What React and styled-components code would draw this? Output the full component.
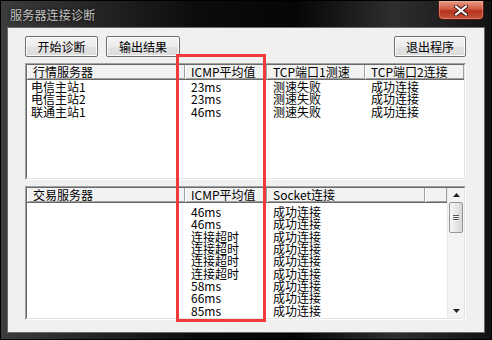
import React from "react";
import styled, { createGlobalStyle } from "styled-components";

const GlobalStyle = createGlobalStyle`
  html, body {
    margin: 0;
    padding: 0;
    background: #000;
  }
  body {
    font-family: "Noto Sans CJK SC", "Liberation Sans", sans-serif;
  }
`;

const topRows = [
  ["电信主站1", "23ms", "测速失败", "成功连接"],
  ["电信主站2", "23ms", "测速失败", "成功连接"],
  ["联通主站1", "46ms", "测速失败", "成功连接"],
];

const bottomRows = [
  ["", "46ms", "成功连接"],
  ["", "46ms", "成功连接"],
  ["", "连接超时", "成功连接"],
  ["", "连接超时", "成功连接"],
  ["", "连接超时", "成功连接"],
  ["", "连接超时", "成功连接"],
  ["", "58ms", "成功连接"],
  ["", "66ms", "成功连接"],
  ["", "85ms", "成功连接"],
];

const TOP_COLS = "158px 82px 98px 1fr";
const BOTTOM_COLS = "158px 82px 158px 1fr";

function App() {
  return (
    <>
      <GlobalStyle />
      <Window>
        <TitleBar>
          <Title>服务器连接诊断</Title>
          <CloseButton>
            <svg width="14" height="11" viewBox="0 0 14 11">
              <path d="M2 1.5 L12 9.5 M12 1.5 L2 9.5" stroke="#3a1a14" strokeWidth="4" strokeLinecap="square" />
              <path d="M2 1.5 L12 9.5 M12 1.5 L2 9.5" stroke="#fff" strokeWidth="2" strokeLinecap="square" />
            </svg>
          </CloseButton>
        </TitleBar>
        <Client>
          <Toolbar>
            <Button $w={73}>开始诊断</Button>
            <Button $w={74}>输出结果</Button>
            <Button $w={72} $push>退出程序</Button>
          </Toolbar>

          <ListBox $h={117} $gap={6}>
            <ListInner>
              <Table>
                <HeaderRow $cols={TOP_COLS}>
                  <HeaderCell>行情服务器</HeaderCell>
                  <HeaderCell>ICMP平均值</HeaderCell>
                  <HeaderCell>TCP端口1测速</HeaderCell>
                  <HeaderCell>TCP端口2连接</HeaderCell>
                </HeaderRow>
                <Rows $pad={1}>
                  {topRows.map((r, i) => (
                    <Row key={i} $cols={TOP_COLS}>
                      {r.map((c, j) => (
                        <Cell key={j} $first={j === 0}>{c}</Cell>
                      ))}
                    </Row>
                  ))}
                </Rows>
              </Table>
            </ListInner>
          </ListBox>

          <ListBox $h={134} $gap={6}>
            <ListInner>
              <Table>
                <HeaderRow $cols={BOTTOM_COLS}>
                  <HeaderCell>交易服务器</HeaderCell>
                  <HeaderCell>ICMP平均值</HeaderCell>
                  <HeaderCell>Socket连接</HeaderCell>
                  <HeaderCell />
                </HeaderRow>
                <Rows $pad={3}>
                  {bottomRows.map((r, i) => (
                    <Row key={i} $cols={BOTTOM_COLS}>
                      {r.map((c, j) => (
                        <Cell key={j} $first={j === 0}>{c}</Cell>
                      ))}
                      <Cell />
                    </Row>
                  ))}
                </Rows>
              </Table>
              <ScrollBar>
                <ArrowBtn>
                  <svg width="7" height="4" viewBox="0 0 7 4">
                    <path d="M3.5 0 L7 4 L0 4 Z" fill="#222" />
                  </svg>
                </ArrowBtn>
                <Thumb>
                  <Grip />
                  <Grip />
                  <Grip />
                </Thumb>
                <Track />
                <ArrowBtn>
                  <svg width="7" height="4" viewBox="0 0 7 4">
                    <path d="M0 0 L7 0 L3.5 4 Z" fill="#222" />
                  </svg>
                </ArrowBtn>
              </ScrollBar>
            </ListInner>
          </ListBox>

          <Highlight />
        </Client>
      </Window>
    </>
  );
}

const Window = styled.div`
  width: 492px;
  height: 340px;
  display: flex;
  flex-direction: column;
  box-sizing: border-box;
  background: linear-gradient(
    to right,
    #3c3c3c 0%,
    #262626 18%,
    #0c0c0c 40%,
    #050505 60%,
    #2e2e2e 80%,
    #121212 100%
  );
  border: 1px solid #000;
`;

const TitleBar = styled.div`
  height: 27px;
  display: flex;
  align-items: flex-start;
  padding-left: 9px;
`;

const Title = styled.div`
  font-size: 12px;
  line-height: 27px;
  color: #c4c4c4;
  text-shadow: 0 0 3px rgba(0, 0, 0, 0.9);
  letter-spacing: 0.2px;
`;

const CloseButton = styled.div`
  margin-left: auto;
  margin-right: 7px;
  width: 46px;
  height: 19px;
  box-sizing: border-box;
  border: 1px solid #4a1a12;
  border-top: none;
  border-radius: 0 0 5px 5px;
  background: linear-gradient(#e79a88 0%, #cf5a42 45%, #b6321c 55%, #c8553a 100%);
  display: flex;
  align-items: center;
  justify-content: center;
  box-shadow: inset 0 0 0 1px rgba(255, 200, 180, 0.35);
`;

const Client = styled.div`
  position: relative;
  flex: 1;
  margin: 0 7px 7px 7px;
  background: #f0f0f0;
  padding: 8px 18px 0 17px;
  display: flex;
  flex-direction: column;
  box-shadow: 0 0 0 1px #6a6a6a;
`;

const Toolbar = styled.div`
  display: flex;
  gap: 8px;
  height: 21px;
`;

const Button = styled.div`
  width: ${(p) => p.$w}px;
  height: 21px;
  box-sizing: border-box;
  margin-left: ${(p) => (p.$push ? "auto" : "0")};
  border: 1px solid #707070;
  border-radius: 2px;
  background: linear-gradient(#f4f4f4 0%, #ececec 50%, #e2e2e2 51%, #dcdcdc 100%);
  box-shadow: inset 0 0 0 1px #fcfcfc;
  font-size: 12px;
  line-height: 19px;
  text-align: center;
  color: #000;
`;

const ListBox = styled.div`
  margin-top: ${(p) => p.$gap}px;
  height: ${(p) => p.$h}px;
  box-sizing: border-box;
  border: 1px solid;
  border-color: #a0a0a0 #ffffff #ffffff #a0a0a0;
  display: flex;
`;

const ListInner = styled.div`
  flex: 1;
  display: flex;
  box-sizing: border-box;
  border: 1px solid;
  border-color: #696969 #e3e3e3 #e3e3e3 #696969;
  background: #fff;
  overflow: hidden;
`;

const Table = styled.div`
  flex: 1;
  display: flex;
  flex-direction: column;
  min-width: 0;
`;

const HeaderRow = styled.div`
  display: grid;
  grid-template-columns: ${(p) => p.$cols};
  height: 14px;
  border-bottom: 1px solid #696969;
  box-shadow: 0 -1px 0 #a0a0a0 inset;
  background: #f2f2f2;
`;

const HeaderCell = styled.div`
  box-sizing: border-box;
  padding-left: 5px;
  border-right: 1px solid #a0a0a0;
  border-left: 1px solid #fff;
  font-size: 12px;
  line-height: 13px;
  color: #000;
  white-space: nowrap;
`;

const Rows = styled.div`
  padding-top: ${(p) => p.$pad}px;
`;

const Row = styled.div`
  display: grid;
  grid-template-columns: ${(p) => p.$cols};
  height: 12.35px;
`;

const Cell = styled.div`
  padding-left: ${(p) => (p.$first ? 4 : 6)}px;
  font-size: 12px;
  line-height: 12.35px;
  color: #000;
  white-space: nowrap;
`;

const ScrollBar = styled.div`
  width: 16px;
  display: flex;
  flex-direction: column;
  background: #f3f3f3;
  border-left: 1px solid #e8e8e8;
`;

const ArrowBtn = styled.div`
  height: 14px;
  display: flex;
  align-items: center;
  justify-content: center;
`;

const Thumb = styled.div`
  height: 31px;
  margin: 0 1px;
  box-sizing: border-box;
  border: 1px solid #979797;
  border-radius: 2px;
  background: linear-gradient(to right, #f6f6f6, #e4e4e4 60%, #d6d6d6);
  display: flex;
  flex-direction: column;
  align-items: center;
  justify-content: center;
  gap: 1px;
`;

const Grip = styled.div`
  width: 6px;
  height: 1px;
  background: #555;
  box-shadow: 0 1px 0 #fff;
`;

const Track = styled.div`
  flex: 1;
`;

const Highlight = styled.div`
  position: absolute;
  left: 168px;
  top: 26px;
  width: 90px;
  height: 268px;
  box-sizing: border-box;
  border: 3px solid #f03a3a;
  pointer-events: none;
`;

export default App;
